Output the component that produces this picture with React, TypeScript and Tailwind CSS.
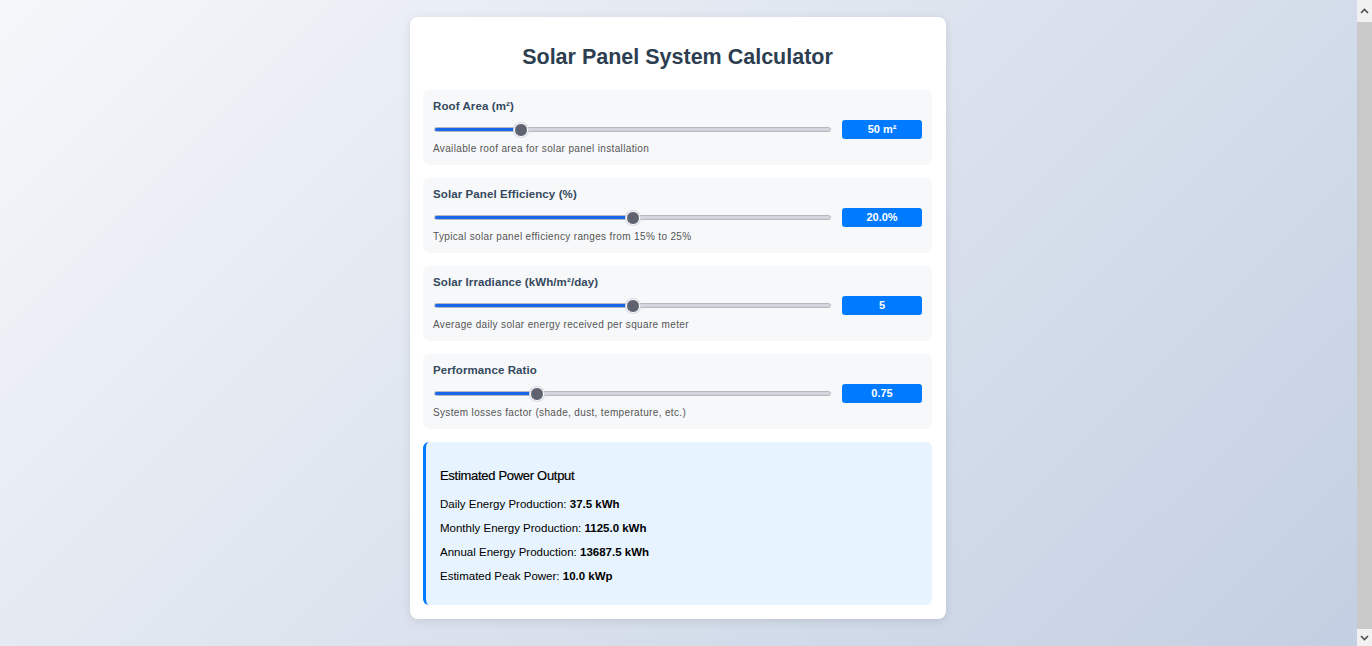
import React from "react";

type TField = {
  label: string;
  value: string;
  percent: number;
  note: string;
};

const fields: TField[] = [
  { label: "Roof Area (m²)", value: "50 m²", percent: 22, note: "Available roof area for solar panel installation" },
  { label: "Solar Panel Efficiency (%)", value: "20.0%", percent: 50, note: "Typical solar panel efficiency ranges from 15% to 25%" },
  { label: "Solar Irradiance (kWh/m²/day)", value: "5", percent: 50, note: "Average daily solar energy received per square meter" },
  { label: "Performance Ratio", value: "0.75", percent: 26, note: "System losses factor (shade, dust, temperature, etc.)" },
];

const results = [
  { label: "Daily Energy Production:", value: "37.5 kWh" },
  { label: "Monthly Energy Production:", value: "1125.0 kWh" },
  { label: "Annual Energy Production:", value: "13687.5 kWh" },
  { label: "Estimated Peak Power:", value: "10.0 kWp" },
];

function Slider({ percent }: { percent: number }) {
  return (
    <div className="relative flex-1 h-[14px] flex items-center">
      <div className="w-full h-[5px] rounded-full bg-[#d4d6dc] border border-[#b4b7c0] overflow-hidden">
        {/* filled part */}
        <div className="h-full bg-[#1a66e8]" style={{ width: `${percent}%` }} />
      </div>
      <div
        className="absolute top-0 w-[14px] h-[14px] -ml-[7px] rounded-full bg-[#5f6270] border border-white shadow-[0_0_0_1px_#d8dbe2]"
        style={{ left: `${percent}%` }}
      />
    </div>
  );
}

// fake page scrollbar, like the one in the screenshot
function ScrollBar() {
  return (
    <div className="w-[15px] h-[646px] bg-[#f1f1f1] flex flex-col items-center">
      <div className="h-[22px] w-full flex items-center justify-center">
        <svg width="9" height="6" viewBox="0 0 9 6">
          <path d="M1 5 L4.5 1.5 L8 5" fill="none" stroke="#505050" strokeWidth="1.6" />
        </svg>
      </div>
      <div className="flex-1 w-full bg-[#c9c9c9]" />
      <div className="h-[17px] w-full flex items-center justify-center">
        <svg width="9" height="6" viewBox="0 0 9 6">
          <path d="M1 1 L4.5 4.5 L8 1" fill="none" stroke="#505050" strokeWidth="1.6" />
        </svg>
      </div>
    </div>
  );
}

export default function App() {
  return (
    <div
      className="h-[646px] w-full flex overflow-hidden"
      style={{ fontFamily: '"Liberation Sans", Arial, sans-serif' }}
    >
      <div className="flex-1 min-h-[658px] pt-[17px] pr-[1px] flex justify-center bg-[linear-gradient(135deg,#f5f7fa_0%,#c3cfe2_100%)]">
        <div className="w-[536px] h-[602px] bg-white rounded-lg shadow-[0_2px_10px_rgba(0,0,0,0.1)] pl-[13px] pr-[14px] pt-[27px]">
          <h1 className="text-center text-[21.5px] font-bold text-[#2c3e50] leading-[26px]">
            Solar Panel System Calculator
          </h1>

          <div className="mt-[20px] flex flex-col gap-[13px]">
            {fields.map((f) => (
              <div key={f.label} className="h-[75px] bg-[#f7f8fa] rounded-md pl-[10px] pr-[10px] pt-[9px]">
                <p className="text-[11.5px] font-bold text-[#34495e] leading-[14px] tracking-[0.1px]">{f.label}</p>
                <div className="flex items-center gap-[11px] mt-[7px] pl-[1px]">
                  <Slider percent={f.percent} />
                  <div className="w-[80px] h-[19px] rounded-[3px] bg-[#007bff] text-white text-[11px] font-bold flex items-center justify-center">
                    {f.value}
                  </div>
                </div>
                <p className="text-[10px] text-[#555] leading-[12px] mt-[4px] tracking-[0.35px]">{f.note}</p>
              </div>
            ))}

            <div className="h-[163px] bg-[#e7f3fe] rounded-md border-l-[3px] border-[#007bff] pl-[14px] pt-[26px]">
              <h3 className="text-[13px] font-medium text-black leading-[16px] tracking-[-0.3px] [-webkit-text-stroke:0.2px_black]">
                Estimated Power Output
              </h3>
              <div className="mt-[13px] flex flex-col gap-[10px]">
                {results.map((r) => (
                  <p key={r.label} className="text-[11.5px] text-black leading-[14px]">
                    {r.label} <span className="font-bold">{r.value}</span>
                  </p>
                ))}
              </div>
            </div>
          </div>
        </div>
      </div>
      <ScrollBar />
    </div>
  );
}
